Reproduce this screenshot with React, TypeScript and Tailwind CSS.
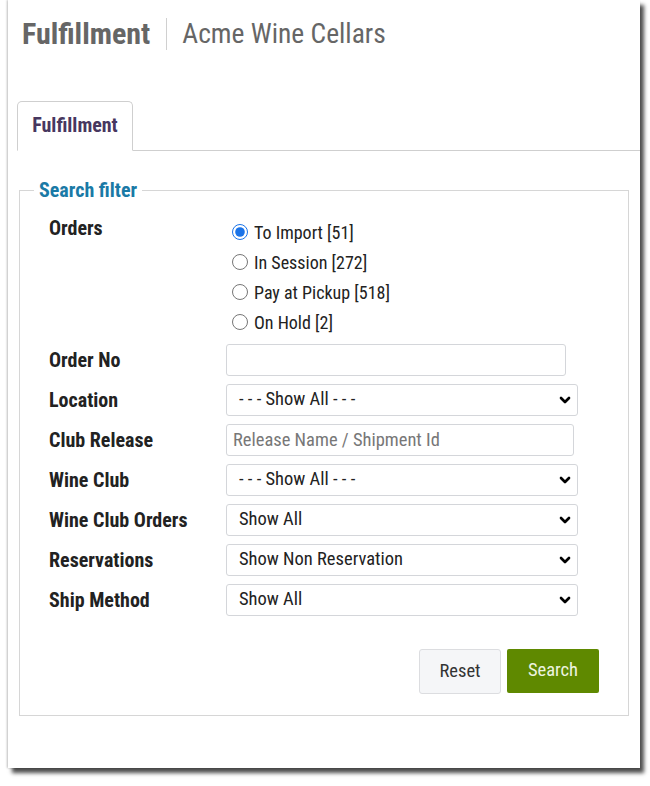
import { ChevronDown } from 'lucide-react'

const font = { fontFamily: '"Roboto Condensed", Roboto, "Liberation Sans", sans-serif' }

const orderTypes = [
  { label: 'To Import [51]', checked: true },
  { label: 'In Session [272]', checked: false },
  { label: 'Pay at Pickup [518]', checked: false },
  { label: 'On Hold [2]', checked: false },
]

function Select({ value, width }: { value: string; width: string }) {
  return (
    <div className={`relative h-8 ${width} rounded-[3px] border border-[#d4d6da] bg-white`}>
      <div className="flex h-full items-center pl-3 text-[18.5px] text-[#222]">{value}</div>
      <ChevronDown size={16} strokeWidth={4} className="absolute right-[4px] top-[7px] text-black" />
    </div>
  )
}

function Row({ label, children }: { label: string; children: React.ReactNode }) {
  return (
    <div className="flex h-8 items-center">
      <div className="w-[177px] text-[20px] font-bold text-[#222]">{label}</div>
      {children}
    </div>
  )
}

export default function App() {
  return (
    <div className="min-h-[786px] bg-white" style={font}>
      <div className="ml-2 h-[768px] w-[632px] bg-white shadow-[4px_5px_4px_rgba(0,0,0,0.7),-1px_0_2px_rgba(0,0,0,0.25)]">
        <div className="flex items-center pl-[14px] pt-[16px]">
          <span className="text-[30px] font-bold leading-[36px] text-[#666]">Fulfillment</span>
          <span className="ml-[16px] mr-[15px] h-8 w-px bg-[#d0d0d0]" />
          <span className="text-[27.5px] leading-[36px] text-[#666]">Acme Wine Cellars</span>
        </div>

        <div className="ml-[9px] mt-[49px] flex border-b border-[#cfcfcf]">
          <div className="-mb-px flex h-[50px] w-[116px] items-center justify-center rounded-t-[5px] border border-b-white border-[#cfcfcf] bg-white pb-[3px] text-[20px] font-bold text-[#47375f]">
            Fulfillment
          </div>
        </div>

        <fieldset className="mx-[11px] mt-[27px] h-[538px] border border-[#d6d6d6]">
          <legend className="ml-[14px] px-[5px] text-[20px] font-bold leading-6 text-[#1a7aa6]">Search filter</legend>

          <div className="px-[29px]">
            <div className="mt-[14px] flex">
              <div className="-mt-[3px] w-[183px] text-[20px] font-bold text-[#222]">Orders</div>
              <div className="flex flex-col pt-[1px]">
                {orderTypes.map((o) => (
                  <label key={o.label} className="flex h-[30px] items-center gap-[6px] text-[18px] text-[#222]">
                    <input type="radio" name="orders" defaultChecked={o.checked} className="m-0 h-4 w-4 accent-[#1a73e8]" />
                    {o.label}
                  </label>
                ))}
              </div>
            </div>

            <div className="mt-[7px] flex flex-col gap-2">
              <Row label="Order No">
                <input className="h-8 w-[340px] rounded-[3px] border border-[#d4d6da] bg-white px-2 outline-none" />
              </Row>
              <Row label="Location">
                <Select value="- - - Show All - - -" width="w-[352px]" />
              </Row>
              <Row label="Club Release">
                <input
                  placeholder="Release Name / Shipment Id"
                  className="h-8 w-[348px] rounded-[3px] border border-[#d4d6da] bg-white px-[6px] text-[18.5px] outline-none placeholder:text-[#777]"
                />
              </Row>
              <Row label="Wine Club">
                <Select value="- - - Show All - - -" width="w-[352px]" />
              </Row>
              <Row label="Wine Club Orders">
                <Select value="Show All" width="w-[352px]" />
              </Row>
              <Row label="Reservations">
                <Select value="Show Non Reservation" width="w-[352px]" />
              </Row>
              <Row label="Ship Method">
                <Select value="Show All" width="w-[352px]" />
              </Row>
            </div>

            <div className="mt-[33px] flex justify-end gap-[6px]">
              <button className="h-[45px] w-[82px] rounded-[3px] border border-[#dcdde0] bg-[#f5f6f8] text-[18.5px] text-[#333]">
                Reset
              </button>
              <button className="h-[44px] w-[92px] rounded-[2px] bg-[#5f8900] text-[18.5px] text-[#eef4e0]">
                Search
              </button>
            </div>
          </div>
        </fieldset>
      </div>
    </div>
  )
}
